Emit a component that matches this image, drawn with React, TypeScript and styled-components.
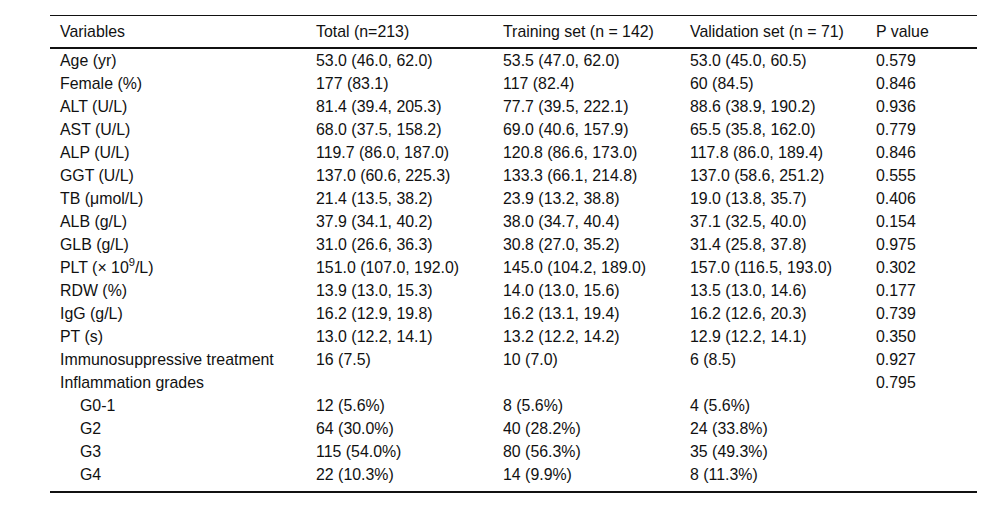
import { createGlobalStyle } from "styled-components";
import styled from "styled-components";

type Row = {
  label: React.ReactNode;
  total: string;
  training: string;
  validation: string;
  p: string;
  sub?: boolean;
};

const rows: Row[] = [
  { label: "Age (yr)", total: "53.0 (46.0, 62.0)", training: "53.5 (47.0, 62.0)", validation: "53.0 (45.0, 60.5)", p: "0.579" },
  { label: "Female (%)", total: "177 (83.1)", training: "117 (82.4)", validation: "60 (84.5)", p: "0.846" },
  { label: "ALT (U/L)", total: "81.4 (39.4, 205.3)", training: "77.7 (39.5, 222.1)", validation: "88.6 (38.9, 190.2)", p: "0.936" },
  { label: "AST (U/L)", total: "68.0 (37.5, 158.2)", training: "69.0 (40.6, 157.9)", validation: "65.5 (35.8, 162.0)", p: "0.779" },
  { label: "ALP (U/L)", total: "119.7 (86.0, 187.0)", training: "120.8 (86.6, 173.0)", validation: "117.8 (86.0, 189.4)", p: "0.846" },
  { label: "GGT (U/L)", total: "137.0 (60.6, 225.3)", training: "133.3 (66.1, 214.8)", validation: "137.0 (58.6, 251.2)", p: "0.555" },
  { label: "TB (μmol/L)", total: "21.4 (13.5, 38.2)", training: "23.9 (13.2, 38.8)", validation: "19.0 (13.8, 35.7)", p: "0.406" },
  { label: "ALB (g/L)", total: "37.9 (34.1, 40.2)", training: "38.0 (34.7, 40.4)", validation: "37.1 (32.5, 40.0)", p: "0.154" },
  { label: "GLB (g/L)", total: "31.0 (26.6, 36.3)", training: "30.8 (27.0, 35.2)", validation: "31.4 (25.8, 37.8)", p: "0.975" },
  {
    label: (
      <>
        PLT (× 10<sup>9</sup>/L)
      </>
    ),
    total: "151.0 (107.0, 192.0)",
    training: "145.0 (104.2, 189.0)",
    validation: "157.0 (116.5, 193.0)",
    p: "0.302",
  },
  { label: "RDW (%)", total: "13.9 (13.0, 15.3)", training: "14.0 (13.0, 15.6)", validation: "13.5 (13.0, 14.6)", p: "0.177" },
  { label: "IgG (g/L)", total: "16.2 (12.9, 19.8)", training: "16.2 (13.1, 19.4)", validation: "16.2 (12.6, 20.3)", p: "0.739" },
  { label: "PT (s)", total: "13.0 (12.2, 14.1)", training: "13.2 (12.2, 14.2)", validation: "12.9 (12.2, 14.1)", p: "0.350" },
  { label: "Immunosuppressive treatment", total: "16 (7.5)", training: "10 (7.0)", validation: "6 (8.5)", p: "0.927" },
  { label: "Inflammation grades", total: "", training: "", validation: "", p: "0.795" },
  { label: "G0-1", total: "12 (5.6%)", training: "8 (5.6%)", validation: "4 (5.6%)", p: "", sub: true },
  { label: "G2", total: "64 (30.0%)", training: "40 (28.2%)", validation: "24 (33.8%)", p: "", sub: true },
  { label: "G3", total: "115 (54.0%)", training: "80 (56.3%)", validation: "35 (49.3%)", p: "", sub: true },
  { label: "G4", total: "22 (10.3%)", training: "14 (9.9%)", validation: "8 (11.3%)", p: "", sub: true },
];

const GlobalStyle = createGlobalStyle`
  body {
    margin: 0;
    background: #fff;
    font-family: "Liberation Sans", Arial, sans-serif;
  }
`;

function App() {
  return (
    <Page>
      <GlobalStyle />
      <Table>
        <colgroup>
          <col style={{ width: 256 }} />
          <col style={{ width: 187 }} />
          <col style={{ width: 187 }} />
          <col style={{ width: 186 }} />
          <col style={{ width: 111 }} />
        </colgroup>
        <thead>
          <tr>
            <HeadCell>Variables</HeadCell>
            <HeadCell>Total (n=213)</HeadCell>
            <HeadCell>Training set (n = 142)</HeadCell>
            <HeadCell>Validation set (n = 71)</HeadCell>
            <HeadCell>P value</HeadCell>
          </tr>
        </thead>
        <tbody>
          {rows.map((r, i) => (
            <BodyRow key={i} $last={i === rows.length - 1}>
              <Cell $sub={r.sub}>{r.label}</Cell>
              <Cell>{r.total}</Cell>
              <Cell>{r.training}</Cell>
              <Cell>{r.validation}</Cell>
              <Cell>{r.p}</Cell>
            </BodyRow>
          ))}
        </tbody>
      </Table>
    </Page>
  );
}

const Page = styled.div`
  padding: 15px 0 0 50px;
`;

const Table = styled.table`
  width: 927px;
  table-layout: fixed;
  border-collapse: collapse;
  color: #111;
  font-size: 15.9px;
  border-top: 1px solid #111;
  border-bottom: 2px solid #111;

  sup {
    font-size: 0.7em;
    line-height: 0;
    vertical-align: 0.6em;
  }
`;

const HeadCell = styled.th`
  text-align: left;
  font-weight: normal;
  height: 31px;
  padding: 0 0 0 10px;
  border-bottom: 2px solid #111;
  vertical-align: middle;
  white-space: nowrap;
`;

const BodyRow = styled.tr<{ $last?: boolean }>`
  td {
    padding-bottom: ${(p) => (p.$last ? "5px" : "0")};
  }
`;

const Cell = styled.td<{ $sub?: boolean }>`
  height: 23px;
  padding: 0 0 0 ${(p) => (p.$sub ? "30px" : "10px")};
  vertical-align: middle;
  white-space: nowrap;
`;

export default App;
